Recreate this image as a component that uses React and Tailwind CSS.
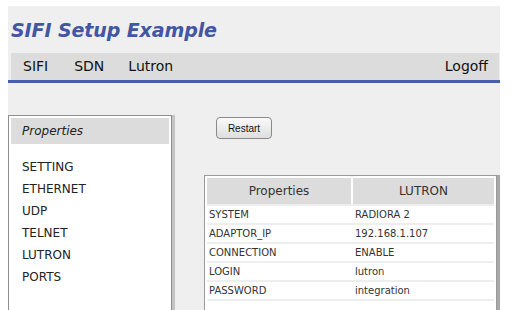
const rows = [
  ["SYSTEM", "RADIORA 2"],
  ["ADAPTOR_IP", "192.168.1.107"],
  ["CONNECTION", "ENABLE"],
  ["LOGIN", "lutron"],
  ["PASSWORD", "integration"],
];

const menu = ["SETTING", "ETHERNET", "UDP", "TELNET", "LUTRON", "PORTS"];

export default function App() {
  return (
    <div className="w-[516px] h-[310px] bg-white pl-[8px] pt-[6px] overflow-hidden font-['DejaVu_Sans',Verdana,sans-serif]">
      <div className="w-[492px] h-[304px] bg-[#eeefee] flex flex-col">
        {/* title */}
        <div className="h-[47px] shrink-0 pl-[3px] pt-[12px]">
          <h1 className="text-[19px] leading-[24px] font-bold italic text-[#4256a3] tracking-[-0.1px]">
            SIFI Setup Example
          </h1>
        </div>

        {/* nav */}
        <div className="shrink-0 ml-[3px] mr-[1px] h-[27px] bg-[#dcdcdc] flex items-center text-[14px] text-[#111]">
          <span className="ml-[12px]">SIFI</span>
          <span className="ml-[26px]">SDN</span>
          <span className="ml-[24px]">Lutron</span>
          <span className="ml-auto mr-[11px]">Logoff</span>
        </div>
        <div className="shrink-0 h-[3px] bg-[#4560a6]" />

        {/* content */}
        <div className="flex mt-[32px] items-start">
          <div className="shrink-0 w-[164px] border border-[#8f8f8f] bg-white shadow-[3px_0_0_#c4c4c4] p-[2px] h-[220px]">
            <div className="h-[26px] bg-[#dcdcdc] flex items-center pl-[11px] text-[12px] italic text-[#222]">
              Properties
            </div>
            <ul className="mt-[12px] pl-[11px] text-[12px] text-[#222]">
              {menu.map((m) => (
                <li key={m} className="h-[22px] leading-[22px]">
                  {m}
                </li>
              ))}
            </ul>
          </div>

          <div className="ml-[32px] flex flex-col items-start">
            <button className="shrink-0 ml-[12px] mt-[2px] w-[56px] h-[22px] rounded-[4px] border border-[#8a8a8a] bg-gradient-to-b from-[#fafafa] to-[#dedede] text-[10px] text-[#111] font-['Liberation_Sans',Arial,sans-serif]">
              Restart
            </button>

            <div className="shrink-0 mt-[36px] w-[293px] border border-[#9a9a9a] shadow-[3px_0_0_#a8a8a8] bg-white p-[2px] h-[200px]">
              <div className="flex gap-[2px] h-[26px] text-[12px] text-[#333]">
                <div className="w-[144px] bg-[#dcdcdc] flex items-center justify-center">Properties</div>
                <div className="flex-1 bg-[#dcdcdc] flex items-center justify-center">LUTRON</div>
              </div>
              {rows.map(([k, v]) => (
                <div key={k} className="flex h-[19px] items-center border-t-2 border-[#eeeeee] text-[10px] text-[#333]">
                  <div className="w-[148px] pl-[2px]">{k}</div>
                  <div className="flex-1">{v}</div>
                </div>
              ))}
              <div className="border-t-2 border-[#eeeeee]" />
            </div>
          </div>
        </div>
      </div>
    </div>
  );
}
